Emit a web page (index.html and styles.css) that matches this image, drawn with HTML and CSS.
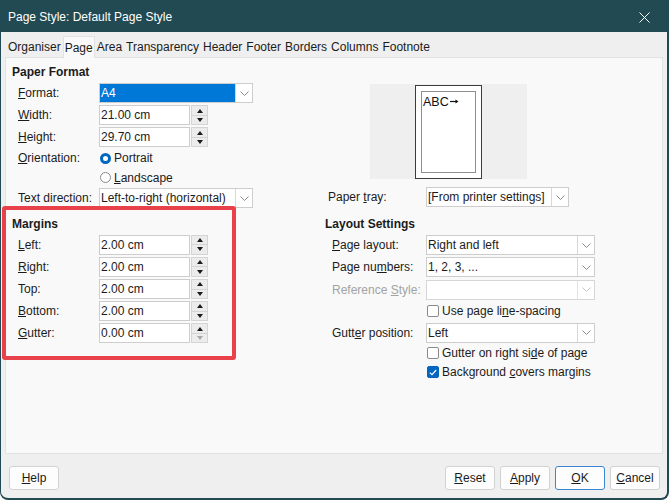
FILE: index.html
```html
<!DOCTYPE html>
<html>
<head>
<meta charset="utf-8">
<link rel="stylesheet" href="styles.css">
</head>
<body>
<div class="window">
  <div class="titlebar">
    <span class="title">Page Style: Default Page Style</span>
    <svg class="close" width="11" height="11" viewBox="0 0 11 11"><path d="M0.5 0.5 L10.5 10.5 M10.5 0.5 L0.5 10.5" stroke="#ffffff" stroke-width="1"/></svg>
  </div>
  <div class="tabs">
    <span class="tab">Organiser</span>
    <span class="tab active">Page</span>
    <span class="tab">Area</span>
    <span class="tab">Transparency</span>
    <span class="tab">Header</span>
    <span class="tab">Footer</span>
    <span class="tab">Borders</span>
    <span class="tab">Columns</span>
    <span class="tab">Footnote</span>
  </div>
  <div class="panel">
    <div class="col col-left">
      <div class="heading">Paper Format</div>
      <div class="rows">
        <div class="row">
          <span class="label"><u>F</u>ormat:</span>
          <div class="combo w154"><span class="value selected">A4</span><span class="drop"><svg width="9" height="5" viewBox="0 0 9 5"><path d="M0.5 0.5 L4.5 4.5 L8.5 0.5" fill="none" stroke="#8a8a8a" stroke-width="1"/></svg></span></div>
        </div>
        <div class="row">
          <span class="label"><u>W</u>idth:</span>
          <div class="spin"><span class="input">21.00 cm</span><span class="arrows"><span class="up"></span><span class="down"></span></span></div>
        </div>
        <div class="row">
          <span class="label"><u>H</u>eight:</span>
          <div class="spin"><span class="input">29.70 cm</span><span class="arrows"><span class="up"></span><span class="down"></span></span></div>
        </div>
        <div class="row radio-row">
          <span class="label"><u>O</u>rientation:</span>
          <span class="radio on"></span><span>Portrait</span>
        </div>
        <div class="row radio-row">
          <span class="label"></span>
          <span class="radio"></span><span><u>L</u>andscape</span>
        </div>
        <div class="row">
          <span class="label">Text direction:</span>
          <div class="combo w154"><span class="value">Left-to-right (horizontal)</span><span class="drop"><svg width="9" height="5" viewBox="0 0 9 5"><path d="M0.5 0.5 L4.5 4.5 L8.5 0.5" fill="none" stroke="#8a8a8a" stroke-width="1"/></svg></span></div>
        </div>
      </div>
      <div class="heading second">Margins</div>
      <div class="rows">
        <div class="row">
          <span class="label"><u>L</u>eft:</span>
          <div class="spin"><span class="input">2.00 cm</span><span class="arrows"><span class="up"></span><span class="down"></span></span></div>
        </div>
        <div class="row">
          <span class="label"><u>R</u>ight:</span>
          <div class="spin"><span class="input">2.00 cm</span><span class="arrows"><span class="up"></span><span class="down"></span></span></div>
        </div>
        <div class="row">
          <span class="label">Top:</span>
          <div class="spin"><span class="input">2.00 cm</span><span class="arrows"><span class="up"></span><span class="down"></span></span></div>
        </div>
        <div class="row">
          <span class="label"><u>B</u>ottom:</span>
          <div class="spin"><span class="input">2.00 cm</span><span class="arrows"><span class="up"></span><span class="down"></span></span></div>
        </div>
        <div class="row">
          <span class="label"><u>G</u>utter:</span>
          <div class="spin"><span class="input">0.00 cm</span><span class="arrows"><span class="up"></span><span class="down disabled"></span></span></div>
        </div>
      </div>
    </div>
    <div class="col col-right">
      <div class="preview">
        <div class="page">
          <div class="page-inner"><span class="abc">ABC</span><svg class="arrow" width="9" height="5" viewBox="0 0 9 5"><path d="M0 2.5 H6" stroke="#111" stroke-width="1.2"/><path d="M5.5 0.5 L8.5 2.5 L5.5 4.5 Z" fill="#111"/></svg></div>
        </div>
      </div>
      <div class="row tray-row">
        <span class="label tray-label">Paper <u>t</u>ray:</span>
        <div class="combo w143"><span class="value">[From printer settings]</span><span class="drop"><svg width="9" height="5" viewBox="0 0 9 5"><path d="M0.5 0.5 L4.5 4.5 L8.5 0.5" fill="none" stroke="#8a8a8a" stroke-width="1"/></svg></span></div>
      </div>
      <div class="heading layout-heading">Layout Settings</div>
      <div class="rows rows-right">
        <div class="row">
          <span class="label wide"><u>P</u>age layout:</span>
          <div class="combo w169"><span class="value">Right and left</span><span class="drop"><svg width="9" height="5" viewBox="0 0 9 5"><path d="M0.5 0.5 L4.5 4.5 L8.5 0.5" fill="none" stroke="#8a8a8a" stroke-width="1"/></svg></span></div>
        </div>
        <div class="row">
          <span class="label wide">Page nu<u>m</u>bers:</span>
          <div class="combo w169"><span class="value">1, 2, 3, ...</span><span class="drop"><svg width="9" height="5" viewBox="0 0 9 5"><path d="M0.5 0.5 L4.5 4.5 L8.5 0.5" fill="none" stroke="#8a8a8a" stroke-width="1"/></svg></span></div>
        </div>
        <div class="row">
          <span class="label wide disabled">Reference <u>S</u>tyle:</span>
          <div class="combo w169 combo-disabled"><span class="value"></span><span class="drop"><svg width="9" height="5" viewBox="0 0 9 5"><path d="M0.5 0.5 L4.5 4.5 L8.5 0.5" fill="none" stroke="#c4c4c4" stroke-width="1"/></svg></span></div>
        </div>
        <div class="check-row first-check">
          <span class="checkbox"></span><span>Use page li<u>n</u>e-spacing</span>
        </div>
        <div class="row">
          <span class="label wide">Gutt<u>e</u>r position:</span>
          <div class="combo w169"><span class="value">Left</span><span class="drop"><svg width="9" height="5" viewBox="0 0 9 5"><path d="M0.5 0.5 L4.5 4.5 L8.5 0.5" fill="none" stroke="#8a8a8a" stroke-width="1"/></svg></span></div>
        </div>
        <div class="check-row">
          <span class="checkbox"></span><span>Gutter on right si<u>d</u>e of page</span>
        </div>
        <div class="check-row">
          <span class="checkbox checked"><svg width="8" height="7" viewBox="0 0 8 7"><path d="M0.8 3.6 L3 5.6 L7.2 1" fill="none" stroke="#ffffff" stroke-width="1.2"/></svg></span><span>Background <u>c</u>overs margins</span>
        </div>
      </div>
    </div>
  </div>
  <div class="footer">
    <span class="btn"><span><u>H</u>elp</span></span>
    <span class="spacer"></span>
    <span class="btn"><span><u>R</u>eset</span></span>
    <span class="btn"><span><u>A</u>pply</span></span>
    <span class="btn default"><span><u>O</u>K</span></span>
    <span class="btn"><span><u>C</u>ancel</span></span>
  </div>
  <div class="highlight"></div>
</div>
</body>
</html>
```

FILE: styles.css
```css
* { box-sizing: border-box; }

html, body {
  margin: 0;
  padding: 0;
  background: #ffffff;
}

body {
  font-family: "Liberation Sans", Arial, sans-serif;
  font-size: 12px;
  color: #1b1b1b;
}

u {
  text-decoration: underline;
  text-decoration-thickness: 1px;
  text-underline-offset: 1px;
}

.window {
  position: relative;
  width: 669px;
  height: 500px;
  background: #efefef;
  border-style: solid;
  border-color: #214a52;
  border-width: 0 2px 2px 1px;
  border-radius: 0 0 8px 8px;
  display: flex;
  flex-direction: column;
  overflow: hidden;
}

.titlebar {
  height: 32px;
  flex-shrink: 0;
  background: #214a52;
  color: #ffffff;
  display: flex;
  align-items: center;
  justify-content: space-between;
  padding: 2px 17px 0 7px;
}

.close { display: block; }

.tabs {
  height: 25px;
  flex-shrink: 0;
  display: flex;
  align-items: flex-end;
  padding-left: 5px;
}

.tab {
  height: 21px;
  line-height: 20px;
  padding: 1px 2px 0;
}

.tab.active {
  position: relative;
  z-index: 1;
  height: 22px;
  line-height: 20px;
  margin-bottom: -1px;
  padding: 1px 1px 0;
  background: #f9f9f9;
  border: 1px solid #e2e2e2;
  border-bottom: none;
}

.panel {
  height: 397px;
  flex-shrink: 0;
  margin: 0 4px;
  background: #f9f9f9;
  border: 1px solid #e2e2e2;
  display: flex;
}

.col-left {
  width: 318px;
  padding-top: 6px;
}

.col-right {
  flex: 1;
  padding-top: 26px;
}

.heading {
  height: 16px;
  line-height: 16px;
  font-weight: bold;
  padding-left: 6px;
  margin-bottom: 2px;
}

.heading.second { margin-top: 6px; }

.rows { padding-left: 12px; }

.row {
  height: 22.2px;
  display: flex;
  align-items: center;
}

.radio-row { height: 19.4px; }

.label {
  width: 81px;
  flex-shrink: 0;
  white-space: nowrap;
}

.label.disabled { color: #a3a3a3; }

.combo {
  height: 20px;
  display: flex;
  background: #ffffff;
  border: 1px solid #cdcdcd;
}

.w154 { width: 154px; }
.w143 { width: 143px; }
.w169 { width: 169px; }

.combo .value {
  flex: 1;
  line-height: 18px;
  padding-left: 1px;
  white-space: nowrap;
  overflow: hidden;
}

.combo .value.selected {
  background: #0078d7;
  color: #ffffff;
}

.combo .drop {
  width: 17px;
  flex-shrink: 0;
  border-left: 1px solid #d8d8d8;
  display: flex;
  align-items: center;
  justify-content: center;
}

.combo-disabled { border-color: #d6d6d6; }
.combo-disabled .drop { border-left-color: #e3e3e3; }

.spin {
  display: flex;
  height: 20px;
}

.spin .input {
  width: 91px;
  background: #ffffff;
  border: 1px solid #cdcdcd;
  line-height: 18px;
  padding-left: 1px;
}

.spin .arrows {
  width: 17px;
  margin-left: 1px;
  display: flex;
  flex-direction: column;
  border: 1px solid #d4d4d4;
  background: #ececec;
}

.spin .up, .spin .down {
  flex: 1;
  display: flex;
  align-items: center;
  justify-content: center;
}

.spin .up { border-bottom: 1px solid #d4d4d4; }

.spin .up::before {
  content: "";
  border-left: 3.5px solid transparent;
  border-right: 3.5px solid transparent;
  border-bottom: 4px solid #1a1a1a;
}

.spin .down::before {
  content: "";
  border-left: 3.5px solid transparent;
  border-right: 3.5px solid transparent;
  border-top: 4px solid #1a1a1a;
}

.spin .down.disabled::before { border-top-color: #a8a8a8; }

.radio {
  width: 11px;
  height: 11px;
  margin: 0 3px 0 1px;
  border-radius: 50%;
  border: 1px solid #8a8a8a;
  background: #ffffff;
  flex-shrink: 0;
}

.radio.on {
  border: 3px solid #0067c0;
  background: #ffffff;
}

.preview {
  margin-left: 46px;
  width: 157px;
  height: 95px;
  background: #efefef;
  padding: 1px 0 0 45px;
}

.page {
  width: 67px;
  height: 94px;
  background: #ffffff;
  border: 1px solid #3b3b3b;
  padding: 5px;
}

.page-inner {
  width: 55px;
  height: 82px;
  border: 1px solid #8f8f8f;
  padding: 3px 0 0 1px;
  line-height: 14px;
  font-size: 12.5px;
  color: #111111;
}

.arrow {
  margin-left: 1px;
  vertical-align: 2px;
}

.tray-row {
  margin-top: 7px;
  padding-left: 4px;
}

.tray-label { width: 98px; }

.layout-heading {
  margin-top: 8px;
  padding-left: 1px;
}

.rows-right { padding-left: 8px; }

.label.wide { width: 94px; }

.check-row {
  height: 19px;
  display: flex;
  align-items: center;
  padding-left: 95px;
}

.first-check { height: 21px; }

.checkbox {
  width: 12px;
  height: 12px;
  margin-right: 3px;
  flex-shrink: 0;
  border: 1px solid #8a8a8a;
  border-radius: 2px;
  background: #ffffff;
  display: flex;
  align-items: center;
  justify-content: center;
}

.checkbox.checked {
  background: #0067c0;
  border-color: #0067c0;
}

.footer {
  flex: 1;
  display: flex;
  align-items: flex-start;
  gap: 5px;
  padding: 12px 7px 0 8px;
}

.spacer { flex: 1; }

.btn {
  width: 50px;
  height: 24px;
  background: #fdfdfd;
  border: 1px solid #d2d2d2;
  border-radius: 3px;
  display: flex;
  align-items: center;
  justify-content: center;
}

.btn.default { border-color: #3a86d1; }

.highlight {
  position: absolute;
  left: 1px;
  top: 206px;
  width: 234px;
  height: 154px;
  border: 4px solid #e9414a;
  border-radius: 3px;
  pointer-events: none;
}
```
